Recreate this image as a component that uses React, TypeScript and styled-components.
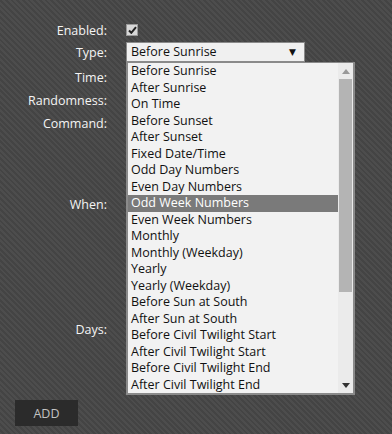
import * as React from "react";
import styled, {createGlobalStyle} from "styled-components";

const GlobalStyle = createGlobalStyle`
    html, body {
        margin: 0;
        padding: 0;
        height: 100%;
    }
    body {
        font-family: "Open Sans", "DejaVu Sans", sans-serif;
        font-size: 12px;
        background-color: #484848;
        background-image: repeating-linear-gradient(45deg, #4d4d4d 0px, #4d4d4d 2px, #444444 2px, #444444 4px);
    }
`

const options = [
    "Before Sunrise",
    "After Sunrise",
    "On Time",
    "Before Sunset",
    "After Sunset",
    "Fixed Date/Time",
    "Odd Day Numbers",
    "Even Day Numbers",
    "Odd Week Numbers",
    "Even Week Numbers",
    "Monthly",
    "Monthly (Weekday)",
    "Yearly",
    "Yearly (Weekday)",
    "Before Sun at South",
    "After Sun at South",
    "Before Civil Twilight Start",
    "After Civil Twilight Start",
    "Before Civil Twilight End",
    "After Civil Twilight End"
];

export default class App extends React.Component<{}, any> {
    render() {
        return <Page>
            <GlobalStyle/>
            <Form>
                <Row height={20}>
                    <Label>Enabled:</Label>
                    <Field><CheckBox>
                        <svg width="9" height="8" viewBox="0 0 9 8">
                            <path d="M1 4.5 L3.3 6.8 L8 1.2" stroke="#222" strokeWidth="2" fill="none"/>
                        </svg>
                    </CheckBox></Field>
                </Row>
                <Row height={24}>
                    <Label>Type:</Label>
                    <Field>
                        <SelectWrap>
                            <SelectBox>
                                <span>Before Sunrise</span>
                                <Arrow>▼</Arrow>
                            </SelectBox>
                            <DropList>
                                <Items>
                                    {options.map(o => <Item key={o} selected={o === "Odd Week Numbers"}>{o}</Item>)}
                                </Items>
                                <ScrollBar>
                                    <ScrollArrow>
                                        <svg width="8" height="5" viewBox="0 0 8 5"><path d="M0 5 L4 0 L8 5 Z" fill="#999"/></svg>
                                    </ScrollArrow>
                                    <Track><Thumb/></Track>
                                    <ScrollArrow>
                                        <svg width="8" height="5" viewBox="0 0 8 5"><path d="M0 0 L8 0 L4 5 Z" fill="#333"/></svg>
                                    </ScrollArrow>
                                </ScrollBar>
                            </DropList>
                        </SelectWrap>
                    </Field>
                </Row>
                <Row height={26}>
                    <Label>Time:</Label>
                    <Field/>
                </Row>
                <Row height={20}>
                    <Label>Randomness:</Label>
                    <Field/>
                </Row>
                <Row height={26}>
                    <Label>Command:</Label>
                    <Field/>
                </Row>
                <Row height={136}>
                    <Label>When:</Label>
                    <Field/>
                </Row>
                <Row height={114}>
                    <Label>Days:</Label>
                    <Field/>
                </Row>
            </Form>
            <AddButton>ADD</AddButton>
        </Page>
    }
}

const Page = styled.div`
    width: 392px;
    height: 434px;
    box-sizing: border-box;
    padding-top: 20px;
    padding-left: 15px;
    overflow: hidden;
`

const Form = styled.div`
    display: flex;
    flex-direction: column;
    width: 377px;
`

const Row = styled.div<{height: number}>`
    display: flex;
    align-items: center;
    height: ${props => props.height}px;
`

const Label = styled.div`
    width: 92px;
    text-align: right;
    color: #f4f4f4;
    font-size: 12.5px;
    flex-shrink: 0;
`

const Field = styled.div`
    margin-left: 19px;
    flex: 1;
    display: flex;
    align-items: center;
`

const CheckBox = styled.div`
    width: 10px;
    height: 10px;
    background: #d8d8d8;
    border: 1px solid #999;
    display: flex;
    align-items: center;
    justify-content: center;
`

const SelectWrap = styled.div`
    position: relative;
`

const SelectBox = styled.div`
    width: 165px;
    height: 18px;
    box-sizing: content-box;
    border: 1px solid #8a8a8a;
    background: #f0f0f0;
    color: #111;
    font-size: 12.5px;
    display: flex;
    align-items: center;
    justify-content: space-between;
    padding: 0 8px 0 4px;
    line-height: 18px;
`

const Arrow = styled.span`
    font-size: 9px;
    color: #111;
`

const DropList = styled.div`
    position: absolute;
    top: 20px;
    left: 0;
    width: 225px;
    border: 2px solid #8a8a8a;
    border-top-width: 1px;
    background: #f2f2f2;
    display: flex;
    z-index: 10;
`

const Items = styled.div`
    flex: 1;
    display: flex;
    flex-direction: column;
`

const Item = styled.div<{selected: boolean}>`
    height: 16.5px;
    line-height: 16.5px;
    padding-left: 3px;
    font-size: 12.5px;
    white-space: nowrap;
    color: ${props => props.selected ? "#ffffff" : "#111"};
    background: ${props => props.selected ? "#7a7a7a" : "transparent"};
`

const ScrollBar = styled.div`
    width: 15px;
    background: #ebebeb;
    display: flex;
    flex-direction: column;
`

const ScrollArrow = styled.div`
    height: 16px;
    display: flex;
    align-items: center;
    justify-content: center;
`

const Track = styled.div`
    flex: 1;
    padding: 0 1px;
`

const Thumb = styled.div`
    height: 213px;
    background: #b4b4b4;
`

const AddButton = styled.div`
    margin-top: 14px;
    width: 63px;
    height: 26px;
    background: #2b2b2b;
    color: #c2c2c2;
    font-size: 12.5px;
    display: flex;
    align-items: center;
    justify-content: center;
`
